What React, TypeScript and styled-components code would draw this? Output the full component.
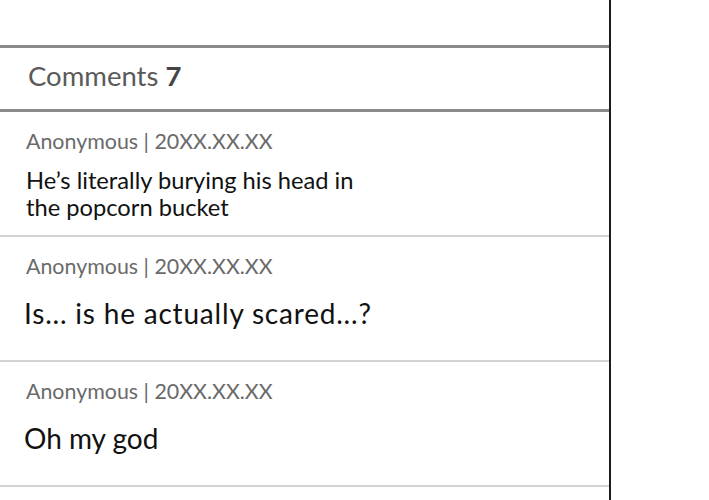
import React from "react";
import styled, { createGlobalStyle } from "styled-components";

const Global = createGlobalStyle`
  html, body { margin: 0; padding: 0; background: #ffffff; }
  body { font-family: Lato, "Noto Sans", sans-serif; }
  * { box-sizing: border-box; }
`;

const Page = styled.div`
  display: flex;
  width: 709px;
  height: 500px;
  overflow: hidden;
  background: #ffffff;
`;

const Panel = styled.section`
  width: 611px;
  flex: none;
  border-right: 2px solid #1c1c1c;
  display: flex;
  flex-direction: column;
`;

const TopSpace = styled.div`
  height: 45px;
`;

const Header = styled.header`
  height: 67px;
  border-top: 3px solid #8a8a8a;
  border-bottom: 3px solid #8a8a8a;
  display: flex;
  align-items: center;
  padding: 0 0 5px 28px;
  font-size: 27.5px;
  line-height: 32px;
  color: #5a5a5a;
`;

const Count = styled.b`
  font-weight: 700;
  color: #444444;
`;

const List = styled.ul`
  list-style: none;
  margin: 0;
  padding: 0;
`;

const Row = styled.li`
  height: 125px;
  border-bottom: 2px solid #d2d2d2;
  padding: 17px 0 0 26px;
`;

const Meta = styled.div`
  font-size: 21.4px;
  line-height: 24px;
  color: #6a6a6a;
`;

const Body = styled.p<{ $size: number; $gap: number; $indent: number; $track: number }>`
  margin: ${(p) => p.$gap}px 0 0 ${(p) => p.$indent}px;
  font-size: ${(p) => p.$size}px;
  line-height: ${(p) => Math.round(p.$size * 1.13)}px;
  letter-spacing: ${(p) => p.$track}px;
  color: #111111;
  width: 350px;
`;

const Side = styled.div`
  flex: 1;
  background: #ffffff;
`;

const comments = [
  { text: "He’s literally burying his head in the popcorn bucket", size: 23.7, gap: 14, indent: 0, track: 0 },
  { text: "Is... is he actually scared...?", size: 28, gap: 19, indent: -2, track: 0.8 },
  { text: "Oh my god", size: 28, gap: 19, indent: -2, track: 0 },
];

export default function App() {
  return (
    <Page>
      <Global />
      <Panel>
        <TopSpace />
        <Header>
          Comments&nbsp;<Count>7</Count>
        </Header>
        <List>
          {comments.map((c, i) => (
            <Row key={i}>
              <Meta>Anonymous | 20XX.XX.XX</Meta>
              <Body $size={c.size} $gap={c.gap} $indent={c.indent} $track={c.track}>
                {c.text}
              </Body>
            </Row>
          ))}
        </List>
      </Panel>
      <Side />
    </Page>
  );
}
